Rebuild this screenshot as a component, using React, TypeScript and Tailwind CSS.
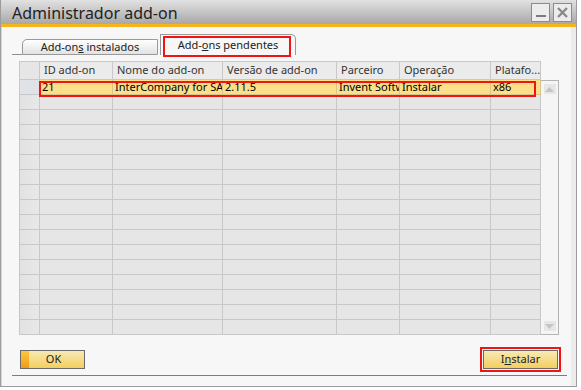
import React from "react";

const columns = [
  { label: "ID add-on", width: "w-[73px]" },
  { label: "Nome do add-on", width: "w-[110px]" },
  { label: "Versão de add-on", width: "w-[114px]" },
  { label: "Parceiro", width: "w-[63px]" },
  { label: "Operação", width: "w-[91px]" },
  { label: "Platafo...", width: "w-[50px]" },
];

const pending = [["21", "InterCompany for SAP Business One", "2.11.5", "Invent Software", "Instalar", "x86"]];

const EMPTY_ROWS = 16;

const App = () => {
  return (
    <div className="w-[581px] h-[390px] bg-white font-['Noto_Sans',sans-serif] text-[11px] text-black overflow-hidden">
      <div className="w-[577px] h-[387px] border border-t-0 border-[#9c9c9c] flex flex-col">
        {/* Title bar */}
        <div className="h-[24px] bg-gradient-to-b from-[#e2e2e2] to-[#a8a8a8] flex items-center justify-between pl-[11px] pr-[4px]">
          <span className="text-[16px] leading-none text-[#222] mt-[1px]">Administrador add-on</span>
          <div className="flex gap-[3px] mt-[1px]">
            <div className="w-[19px] h-[19px] border border-[#8c8c8c] bg-[#ececec] flex items-end justify-center pb-[4px]">
              <div className="w-[10px] h-[2px] bg-[#7a7a7a]" />
            </div>
            <div className="w-[19px] h-[19px] border border-[#8c8c8c] bg-[#ececec] flex items-center justify-center">
              <svg width="11" height="11" viewBox="0 0 11 11">
                <path d="M1 1 L10 10 M10 1 L1 10" stroke="#8a8a8a" strokeWidth="2.4" />
              </svg>
            </div>
          </div>
        </div>
        <div className="h-[3px] bg-[#f7b419]" />

        {/* Body */}
        <div className="flex-1 bg-[#f7f7f7] border-l border-[#d6d6d6] border-r-[5px] border-r-[#ececec] flex flex-col">
          {/* Tabs */}
          <div className="flex items-end h-[21px] mt-[7px] ml-[10px]">
            <div className="w-[10px] border-b border-[#8f8f8f]" />
            <div className="w-[136px] h-[16px] border border-[#9a9a9a] rounded-tl-[5px] bg-gradient-to-b from-[#ffffff] to-[#e2e2e2] flex items-center justify-center text-[#222]">
              <span>
                Add-on<u>s</u> instalados
              </span>
            </div>
            <div className="relative w-[136px] h-[21px] ml-[2px] border border-b-0 border-[#9a9a9a] rounded-tr-[5px] bg-[#f7f7f7] flex items-center justify-center text-[#222]">
              <span>
                Add-<u>o</u>ns pendentes
              </span>
              <div className="absolute left-[2px] top-[1px] w-[128px] h-[21px] border-2 border-[#f01414]" />
            </div>
          </div>

          {/* Grid */}
          <div className="relative flex mt-[6px] ml-[17px]">
            <div className="flex flex-col border-l border-[#c8c8c8]">
              <div className="flex h-[19px]">
                <div className="w-[20px] bg-[#e6e6e6] border-r border-y border-[#c8c8c8]" />
                {columns.map((col) => (
                  <div
                    key={col.label}
                    className={`${col.width} bg-[#ebebeb] border-r border-y border-[#c8c8c8] pl-[4px] flex items-center text-[#333] whitespace-nowrap overflow-hidden`}
                  >
                    {col.label}
                  </div>
                ))}
              </div>
              {pending.map((row, i) => (
                <div key={i} className="flex h-[15px]">
                  <div className="w-[20px] bg-[#dfe3e8] border-r border-b border-[#c8c8c8]" />
                  {row.map((cell, j) => (
                    <div
                      key={j}
                      className={`${columns[j].width} bg-[#fcdf88] border-r border-b border-[#d9c48a] pl-[2px] whitespace-nowrap overflow-hidden leading-[14px]`}
                    >
                      <span className="block overflow-hidden">{cell}</span>
                    </div>
                  ))}
                </div>
              ))}
              {Array.from({ length: EMPTY_ROWS }).map((_, i) => (
                <div key={i} className="flex h-[15px]">
                  <div className="w-[20px] bg-gradient-to-r from-[#e2e2e2] to-[#e8e8e8] border-r border-b border-[#c8c8c8]" />
                  {columns.map((col) => (
                    <div key={col.label} className={`${col.width} bg-[#e6e6e6] border-r border-b border-[#c8c8c8]`} />
                  ))}
                </div>
              ))}
            </div>
            {/* Scrollbar */}
            <div className="w-[18px] mt-[19px] h-[255px] border border-l-0 border-[#b4b4b4] bg-[#f5f5f5] flex flex-col justify-between items-center py-[3px]">
              <div className="w-[12px] h-[10px] bg-[#e6e6e6] flex items-center justify-center">
                <svg width="9" height="5" viewBox="0 0 9 5">
                  <path d="M0 5 L4.5 0 L9 5 Z" fill="#c4c4c4" />
                </svg>
              </div>
              <div className="w-[12px] h-[10px] bg-[#e6e6e6] flex items-center justify-center">
                <svg width="9" height="5" viewBox="0 0 9 5">
                  <path d="M0 0 L9 0 L4.5 5 Z" fill="#c4c4c4" />
                </svg>
              </div>
            </div>
            {/* Highlight on pending row */}
            <div className="absolute left-[20px] top-[20px] w-[497px] h-[16px] border-2 border-[#f01414]" />
          </div>

          {/* Buttons */}
          <div className="flex justify-between items-center mt-[12px] ml-[18px] mr-[10px]">
            <button className="w-[65px] h-[19px] border border-[#6a6a6a] flex">
              <div className="w-[8px] h-full bg-gradient-to-b from-[#f9c93a] to-[#ef9a1c]" />
              <div className="flex-1 h-full bg-gradient-to-b from-[#f8e9b4] to-[#f3cf5a] flex items-center justify-center pr-[6px] text-[#222]">
                OK
              </div>
            </button>
            <div className="p-[1px] border-2 border-[#f01414]">
              <button className="w-[75px] h-[19px] border border-[#6a6a6a] bg-gradient-to-b from-[#f8e9b4] to-[#f3cf5a] flex items-center justify-center text-[#222]">
                <span>
                  I<u>n</u>stalar
                </span>
              </button>
            </div>
          </div>

          <div className="mt-[3px] ml-[10px] mr-[4px] border-b border-[#7c7c7c]" />
        </div>
      </div>
    </div>
  );
};

export default App;
